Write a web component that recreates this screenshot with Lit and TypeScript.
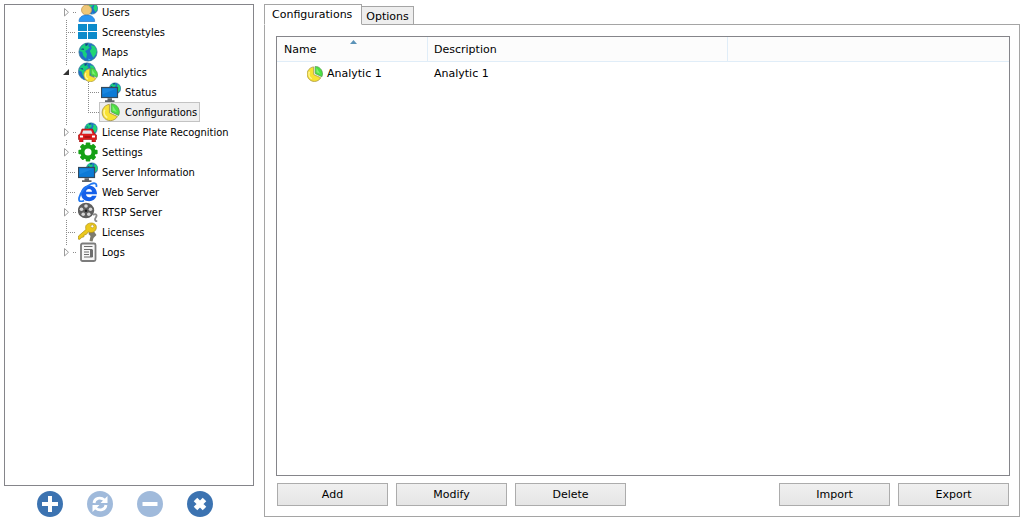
import { LitElement, html, svg, css, nothing } from "lit";
import { customElement, state } from "lit/decorators.js";
import { classMap } from "lit/directives/class-map.js";

const globe = (cx: number, cy: number, r: number) => svg`
  <g transform="translate(${cx - r} ${cy - r}) scale(${r / 10})">
    <circle cx="10" cy="10" r="9.6" fill="#1f6fca" stroke="#3f7f96" stroke-width=".8"/>
    <path d="M3 4 L7 1 L11 2 L10 4 L12 5 L9 8 L7 9 L9 12 L8 17 L5 14 L4 10 L1 9Z" fill="#17cf7d"/>
    <path d="M13 3 L17 4 L19.3 9 L18 13 L15.5 16 L13.5 12 L12 9 L14 6Z" fill="#20d673"/>
    <path d="M7 1 L10 1 L9.5 3 L7.5 4Z M2 7 L5 6 L6 8Z" fill="#123f8c"/>
    <path d="M10 17 L13 17.5 L11 19Z" fill="#2fb5f0"/>
  </g>`;

const pie = (cx: number, cy: number, r: number) => svg`
  <g transform="translate(${cx} ${cy}) scale(${r / 8})">
    <path d="M-1 -7.500 A7.700 7.700 0 1 0 6.500 4 L-1 .5Z" fill="#f8e233" stroke="#a89545" stroke-width=".8"/>
    <path d="M-5.500 -2.500 A6 6 0 0 0 -3 5" fill="none" stroke="#fff59c" stroke-width="1.500"/>
    <path d="M.6 -8 C5 -8 8.300 -4.500 8.300 0 C8.300 1 8 2 7.600 2.900 L.6 -.5Z" fill="#4be044" stroke="#579c4f" stroke-width=".8"/>
    <path d="M2 -6.500V-1.800L6 0Z" fill="#a6f79b" opacity=".6"/>
  </g>`;

const monitor = svg`
  ${globe(14, 6.5, 6)}
  <rect x=".5" y="5.500" width="16" height="10" fill="#0c7ad6" stroke="#34495c" stroke-width="1.200"/>
  <path d="M1.500 6.500H15.500L1.500 12.500Z" fill="#2591e8" opacity=".5"/>
  <path d="M6.500 16.200h4.500v2h2.500v1.800H4v-1.800h2.500z" fill="#606468"/>`;

const icons: Record<string, unknown> = {
  users: svg`
    ${globe(14, 6.5, 6)}
    <circle cx="8.500" cy="8" r="5" fill="#efc878" stroke="#c79a56" stroke-width=".8"/>
    <path d="M1 19.500C1 15.500 4 13 8.700 13s8 2.500 8 6.500z" fill="#2b97f3" stroke="#2374c4" stroke-width=".7"/>`,
  screens: svg`
    <path d="M0 2h9v7H0zM10 2h9v7h-9zM0 10h9v7H0zM10 10h9v7h-9z" fill="#0c8bcb"/>`,
  maps: globe(10, 10, 9.5),
  analytics: svg`${globe(9, 9.5, 9)}${pie(12.5, 13, 6.8)}`,
  monitor,
  pie: pie(9.5, 10.3, 8.5),
  car: svg`
    ${globe(13, 7, 6.5)}
    <path d="M4 7h10.500l2 4.500 2 1.500v4.500h-1V20h-3.500v-2.500h-9V20H1.500v-2.500h-1V13l2-1.500z" fill="#dc1d1d" stroke="#971313" stroke-width=".6"/>
    <path d="M5.200 8.500h8l1.300 3.200H4z" fill="#dfe9ee"/>
    <path d="M2 13.500h3v2H2zM14 13.500h3v2h-3z" fill="#fff"/>
    <path d="M6.500 15h6" stroke="#7c0b0b" stroke-width="1"/>`,
  gear: svg`
    <g fill="#15a016">
      ${[0, 45, 90, 135].map(
        (a) => svg`<rect x="7.700" y=".4" width="4.600" height="19.200" rx="1" transform="rotate(${a} 10 10)"/>`
      )}
      <circle cx="10" cy="10" r="7.600"/>
    </g>
    <circle cx="10" cy="10" r="3.500" fill="#fff"/>`,
  web: svg`
    <path fill-rule="evenodd" d="M11 3.500C15.800 3.500 19 7 19 12.300H8C8.200 14.300 9.500 15.300 11.200 15.300C12.600 15.300 13.500 14.800 14 13.800H18.600C17.500 17.200 14.800 19.200 11.200 19.200C6.300 19.200 3 16 3 11.500C3 6.800 6.300 3.500 11 3.500ZM8 9.700H14C13.800 7.900 12.700 7 11 7S8.300 7.900 8 9.700Z" fill="#1560ea"/>
    <path d="M6 18.500C2.500 20.500 .3 19.500 1.200 15.500C2.500 10 7.500 4.500 13 2C16.500 .5 19.200 1.200 18.300 5" fill="none" stroke="#2379f2" stroke-width="1.800"/>`,
  reel: svg`
    <path d="M15 13C18 11 19.500 13 17.800 15.500S17.500 19 19.200 19.600" fill="none" stroke="#8d8d8d" stroke-width="1.800"/>
    <ellipse cx="8" cy="8.500" rx="8.200" ry="7.800" fill="#5e5e5e"/>
    <g fill="#d6d6d6">
      <circle cx="8" cy="4" r="1.800"/><circle cx="12.500" cy="7.300" r="1.800"/>
      <circle cx="10.800" cy="12.300" r="1.800"/><circle cx="5.200" cy="12.300" r="1.800"/>
      <circle cx="3.500" cy="7.300" r="1.800"/>
    </g>
    <circle cx="8" cy="8.700" r="1.200" fill="#1d1d1d"/>`,
  keys: svg`
    <path d="M12 8l4 1.500L18.500 13l-3 3-1 3.500-3-.5 1-5-2-2z" fill="#7d7b6e"/>
    <path d="M8 3.500C10 .5 15.500 0 17.800 3c1.800 3.500-1 8-5.300 7.500-1 0-1.500-.3-2.200-.5L8.200 12.500l-2 .3-.3 2L3.500 15.500 2 17.300 0 17 .5 14 8 7.500C7.500 6 7.500 4.800 8 3.500z" fill="#ecc91c" stroke="#ab8c16" stroke-width=".7"/>
    <circle cx="14.300" cy="4.300" r="1.500" fill="#fff" stroke="#ab8c16" stroke-width=".6"/>`,
  logs: svg`
    <rect x="3" y="1.500" width="14.500" height="17.500" rx="1.500" fill="#f6f6f6" stroke="#7c7c7c" stroke-width="1.800"/>
    <path d="M6 4.500h8.500M6 7.500h8.500M6 10h5M6 12.500h5M6 15h8.500" stroke="#6d6d6d" stroke-width="1.200"/>
    <rect x="12" y="8" width="3" height="7" fill="#6d6d6d"/>`,
};

const icon = (name: string) =>
  html`<svg class="icon" viewBox="0 0 20 20" aria-hidden="true">${icons[name]}</svg>`;

interface TreeNode {
  label: string;
  icon: string;
  expandable?: boolean;
  children?: TreeNode[];
}

const tree: TreeNode[] = [
  { label: "Users", icon: "users", expandable: true },
  { label: "Screenstyles", icon: "screens" },
  { label: "Maps", icon: "maps" },
  {
    label: "Analytics",
    icon: "analytics",
    expandable: true,
    children: [
      { label: "Status", icon: "monitor" },
      { label: "Configurations", icon: "pie" },
    ],
  },
  { label: "License Plate Recognition", icon: "car", expandable: true },
  { label: "Settings", icon: "gear", expandable: true },
  { label: "Server Information", icon: "monitor" },
  { label: "Web Server", icon: "web" },
  { label: "RTSP Server", icon: "reel", expandable: true },
  { label: "Licenses", icon: "keys" },
  { label: "Logs", icon: "logs", expandable: true },
];

@customElement("nav-tree")
export class NavTree extends LitElement {
  @state() private selected = "Configurations";
  @state() private open = true;

  static styles = css`
    :host {
      display: block;
      overflow: hidden;
      border: 1px solid #85858a;
      background: #fff;
      font: 11px/16px "DejaVu Sans Condensed", "DejaVu Sans", sans-serif;
      color: #000;
    }
    ul {
      list-style: none;
      margin: 0;
      padding: 0;
    }
    .root {
      margin-top: -3px;
      padding-left: 53px;
    }
    .row {
      display: flex;
      height: 20px;
    }
    .guide {
      flex: none;
      display: block;
      width: 18px;
      height: 20px;
    }
    .guide.child {
      width: 23px;
    }
    .guide path {
      fill: none;
    }
    .guide .dots {
      stroke: #8a8a8a;
      stroke-dasharray: 1 1;
    }
    .guide .closed {
      fill: #fff;
      stroke: #9c9c9c;
    }
    .guide .opened {
      fill: #333;
    }
    button {
      font: inherit;
      color: inherit;
      background: none;
      border: 0;
      padding: 0;
      margin: 0;
    }
    .item {
      display: flex;
      align-items: center;
      gap: 4px;
      height: 20px;
      box-sizing: border-box;
      border: 1px solid transparent;
      padding: 0 2px 0 1px;
      white-space: nowrap;
    }
    .item span {
      padding-top: 2px;
    }
    .item.selected {
      background: #efefef;
      border-color: #c3c3c3;
    }
    .icon {
      flex: none;
      width: 20px;
      height: 20px;
    }
  `;

  private guide(node: TreeNode, last: boolean) {
    if (!node.expandable) {
      return html`<svg class="guide" aria-hidden="true">
        <path class="dots" d="M8.500 0V20M8 10.500H18" />
      </svg>`;
    }
    const opened = !!node.children && this.open;
    return html`<button
      aria-label=${`Toggle ${node.label}`}
      aria-expanded=${opened}
      @click=${() => node.children && (this.open = !this.open)}
    >
      <svg class="guide" aria-hidden="true">
        <path class="dots" d=${last ? "M8.5 0V4M15 10.5H18" : "M8.5 0V4M8.5 18V20M15 10.5H18"} />
        ${opened
          ? svg`<path class="opened" d="M11 7V13H5Z"/>`
          : svg`<path class="closed" d="M6.500 6.500V14L10.500 10.250Z"/>`}
      </svg>
    </button>`;
  }

  private item(node: TreeNode) {
    const selected = this.selected === node.label;
    return html`<button
      class=${classMap({ item: true, selected })}
      @click=${() => (this.selected = node.label)}
    >
      ${icon(node.icon)}<span>${node.label}</span>
    </button>`;
  }

  render() {
    return html`<ul class="root">
      ${tree.map(
        (node, i) => html`<li>
          <div class="row">${this.guide(node, i === tree.length - 1)}${this.item(node)}</div>
          ${node.children && this.open
            ? html`<ul>
                ${node.children.map(
                  (child, j, all) => html`<li class="row">
                    <svg class="guide" aria-hidden="true"><path class="dots" d="M8.500 0V20" /></svg>
                    <svg class="guide child" aria-hidden="true">
                      <path class="dots" d=${j === all.length - 1 ? "M12.5 0V10M12 10.5H23" : "M12.5 0V20M12 10.5H23"} />
                    </svg>
                    ${this.item(child)}
                  </li>`
                )}
              </ul>`
            : nothing}
        </li>`
      )}
    </ul>`;
  }
}

const actions = [
  { label: "Add", off: false, glyph: svg`<path d="M13 5V21M5 13H21" stroke-width="4"/>` },
  {
    label: "Refresh",
    off: true,
    glyph: svg`
      <path d="M7 12C7.500 7 13.500 5.500 17.500 9M19 14C18.500 19 12.500 20.500 8.500 17" stroke-width="2.800"/>
      <path d="M20.500 5V12H13.500ZM5.500 21V14H12.500Z" fill="#fff" stroke="none"/>`,
  },
  { label: "Remove", off: true, glyph: svg`<path d="M5.500 13H20.500" stroke-width="4"/>` },
  { label: "Close", off: false, glyph: svg`<path d="M8.500 8.500L17.500 17.500M17.500 8.500L8.500 17.500" stroke-width="5"/>` },
];

@customElement("app-root")
export class AppRoot extends LitElement {
  @state() private tab = "Configurations";

  static styles = css`
    :host {
      display: flex;
      gap: 10px;
      box-sizing: border-box;
      height: 100vh;
      padding: 4px 3px 6px 4px;
      background: #fff;
      color: #000;
      font: 11px/16px "DejaVu Sans", sans-serif;
    }
    button {
      font: inherit;
      color: inherit;
      margin: 0;
    }
    .side {
      flex: none;
      width: 250px;
      display: flex;
      flex-direction: column;
      gap: 5px;
    }
    nav-tree {
      flex: 1;
    }
    .actions {
      display: flex;
      gap: 24px;
      padding-left: 33px;
    }
    .round {
      display: block;
      width: 26px;
      height: 26px;
      padding: 0;
      border: 0;
      border-radius: 50%;
      background: #3c73b1;
    }
    .round:disabled {
      background: #a0badb;
    }
    .round svg {
      display: block;
      width: 26px;
      height: 26px;
      fill: none;
      stroke: #fff;
    }
    .main {
      flex: 1;
      min-width: 0;
      display: flex;
      flex-direction: column;
    }
    .tabs {
      display: flex;
      align-items: flex-end;
      height: 21px;
      margin-bottom: -1px;
      z-index: 1;
    }
    .tab {
      box-sizing: border-box;
      height: 19px;
      padding: 2px 4px 0;
      border: 1px solid #a5a5a5;
      border-left: 0;
      background: #eee;
      line-height: 16px;
    }
    .tab.active {
      height: 21px;
      padding: 0 9px 0 7px;
      border-left: 1px solid #a5a5a5;
      border-bottom-color: #fff;
      background: #fff;
    }
    .panel {
      flex: 1;
      min-height: 0;
      display: flex;
      flex-direction: column;
      gap: 7px;
      padding: 11px 9px 10px 11px;
      border: 1px solid #a5a5a5;
    }
    .list {
      flex: 1;
      min-height: 0;
      overflow: auto;
      border: 1px solid #85858a;
    }
    table {
      width: 100%;
      table-layout: fixed;
      border-collapse: separate;
      border-spacing: 0;
    }
    th,
    td {
      box-sizing: border-box;
      padding: 0 6px;
      text-align: left;
      font-weight: normal;
    }
    th {
      height: 25px;
      background: #fcfcfc;
      border-bottom: 1px solid #e0edf8;
    }
    th:not(:last-child) {
      border-right: 1px solid #e0edf8;
    }
    .name {
      width: 151px;
      padding-left: 7px;
    }
    .desc {
      width: 300px;
      padding-top: 2px;
    }
    td {
      height: 22px;
      padding-top: 1px;
    }
    .entry {
      display: flex;
      align-items: center;
      gap: 4px;
      padding-left: 23px;
    }
    .entry svg {
      width: 16px;
      height: 16px;
    }
    .head {
      display: grid;
      grid-template-columns: 66px auto;
      align-items: end;
      height: 18px;
    }
    .sort {
      align-self: start;
      width: 7px;
      height: 4px;
    }
    .buttons {
      display: flex;
      gap: 8px;
      padding: 0 1px;
    }
    .push {
      width: 111px;
      height: 23px;
      padding: 0;
      border: 1px solid #acacac;
      background: linear-gradient(#f0f0f0, #e5e5e5);
    }
    .spacer {
      flex: 1;
    }
  `;

  private push(label: string) {
    return html`<button class="push">${label}</button>`;
  }

  render() {
    return html`
      <aside class="side">
        <nav-tree></nav-tree>
        <div class="actions">
          ${actions.map(
            (a) => html`<button class="round" aria-label=${a.label} ?disabled=${a.off}>
              <svg viewBox="0 0 26 26" aria-hidden="true">${a.glyph}</svg>
            </button>`
          )}
        </div>
      </aside>
      <main class="main">
        <div class="tabs" role="tablist">
          ${["Configurations", "Options"].map(
            (name) => html`<button
              role="tab"
              aria-selected=${this.tab === name}
              class=${classMap({ tab: true, active: this.tab === name })}
              @click=${() => (this.tab = name)}
            >${name}</button>`
          )}
        </div>
        <section class="panel">
          <div class="list">
            <table>
              <thead>
                <tr>
                  <th class="name" aria-sort="ascending">
                    <span class="head">
                      Name
                      <svg class="sort" viewBox="0 0 7 4" aria-hidden="true">
                        <path d="M0 4L3.500 0L7 4Z" fill="#5b93b8" />
                      </svg>
                    </span>
                  </th>
                  <th class="desc">Description</th>
                  <th></th>
                </tr>
              </thead>
              <tbody>
                <tr>
                  <td class="name">
                    <span class="entry">
                      <svg viewBox="0 0 20 20" aria-hidden="true">${pie(9.5, 10, 9.5)}</svg>Analytic 1
                    </span>
                  </td>
                  <td>Analytic 1</td>
                  <td></td>
                </tr>
              </tbody>
            </table>
          </div>
          <div class="buttons">
            ${["Add", "Modify", "Delete"].map((l) => this.push(l))}
            <span class="spacer"></span>
            ${["Import", "Export"].map((l) => this.push(l))}
          </div>
        </section>
      </main>
    `;
  }
}
